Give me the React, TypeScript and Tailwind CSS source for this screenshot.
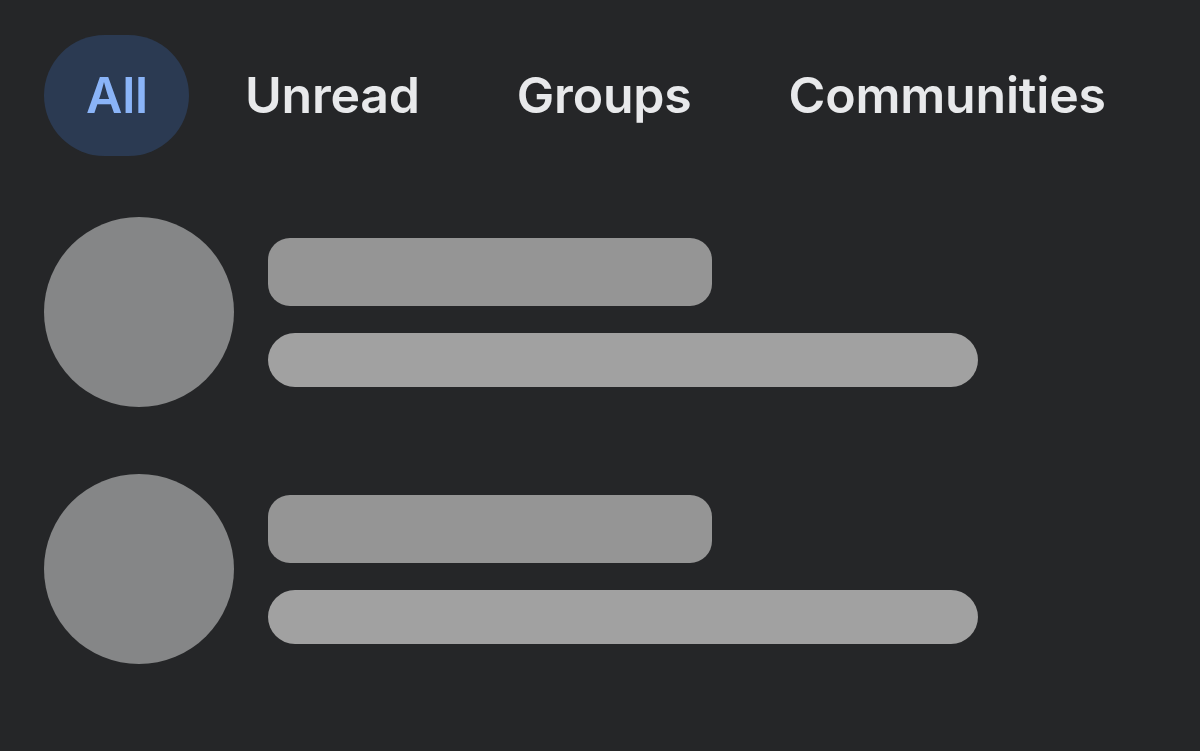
import React from 'react'

const tabs = ['All', 'Unread', 'Groups', 'Communities']

function SkeletonRow() {
    return (
        <div className="flex items-center gap-[34px]">
            <div className="w-[190px] h-[190px] rounded-full bg-[#858687] shrink-0" />
            <div className="flex flex-col gap-[27px]">
                <div className="w-[444px] h-[68px] rounded-[22px] bg-[#959595]" />
                <div className="w-[710px] h-[54px] rounded-[27px] bg-[#a1a1a1]" />
            </div>
        </div>
    )
}

export default function App() {
    return (
        <div
            className="w-[1200px] h-[751px] bg-[#252628] overflow-hidden pl-[44px] pt-[35px]"
            style={{ fontFamily: 'Inter, "Liberation Sans", sans-serif' }}
        >
            <div className="flex items-center gap-[14px]">
                {tabs.map((tab, i) => (
                    <div
                        key={tab}
                        className={
                            i === 0
                                ? 'h-[121px] pl-[42px] pr-[41px] flex items-center rounded-full bg-[#2b3a52] text-[#8ab4f8] text-[50px] font-semibold tracking-[-0.2px]'
                                : 'h-[121px] pl-[42px] pr-[41px] flex items-center rounded-full text-[#e8e9eb] text-[50px] font-semibold tracking-[-0.2px]'
                        }
                    >
                        {tab}
                    </div>
                ))}
            </div>
            <div className="flex flex-col gap-[67px] mt-[61px]">
                <SkeletonRow />
                <SkeletonRow />
            </div>
        </div>
    )
}
